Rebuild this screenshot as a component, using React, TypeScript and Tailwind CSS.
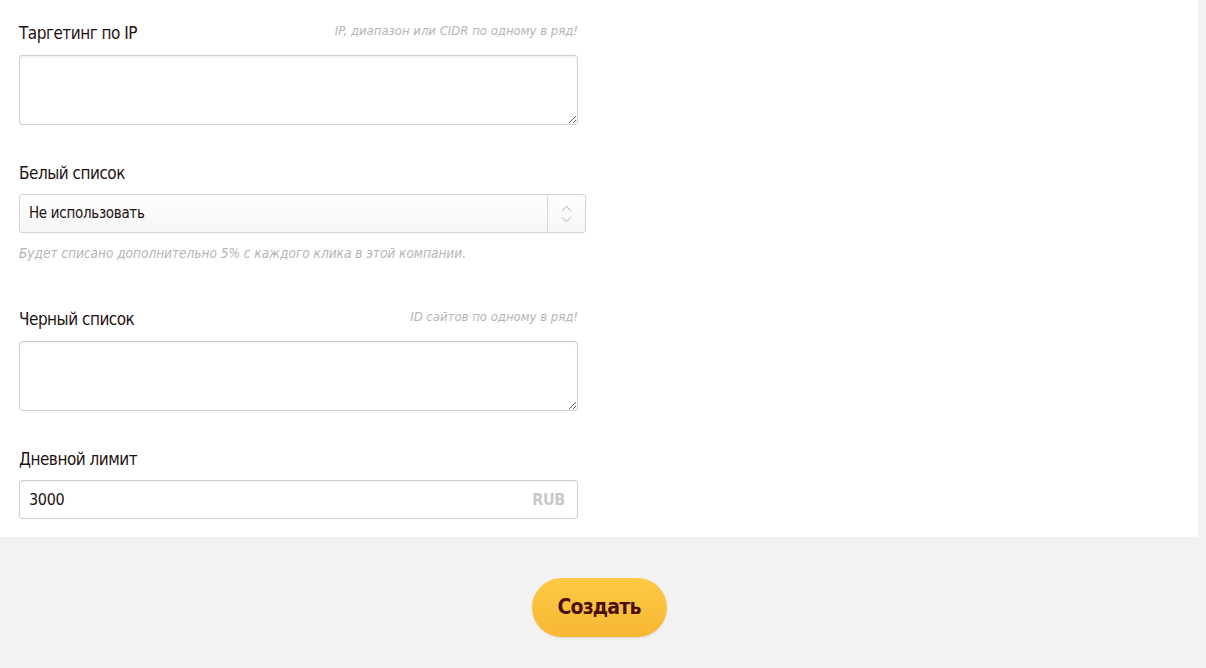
import { ChevronUp, ChevronDown } from "lucide-react";

const font = "font-['DejaVu_Sans_Condensed','Liberation_Sans',sans-serif]";

function Label({ text, hint }: { text: string; hint?: string }) {
  return (
    <div className="flex items-end justify-between w-[559px]">
      <span className="text-[17px] leading-[22px] tracking-[-0.5px] text-[#1f1212]">{text}</span>
      {hint && <span className="text-[13px] italic text-[#b5b5b5] leading-[18px] mb-[4px]">{hint}</span>}
    </div>
  );
}

function Area() {
  return (
    <textarea className="block w-[559px] h-[70px] mt-[11px] border border-[#cfcfcf] rounded-[3px] bg-white shadow-[inset_0_1px_2px_rgba(0,0,0,0.08)] outline-none resize-y" />
  );
}

export default function App() {
  return (
    <div className={`min-h-[668px] bg-[#f2f2f2] ${font}`}>
      <div className="w-[1198px] bg-white pl-[19px] pt-[22px] h-[537px]">
        <Label text="Таргетинг по IP" hint="IP, диапазон или CIDR по одному в ряд!" />
        <Area />

        <div className="mt-[37px]">
          <Label text="Белый список" />
        </div>
        <div className="mt-[10px] w-[567px] h-[39px] flex border border-[#d2d2d2] rounded-[3px] bg-gradient-to-b from-white to-[#f5f5f5]">
          <span className="flex-1 pl-[9px] flex items-center text-[15px] tracking-[-0.3px] text-[#1f1212]">Не использовать</span>
          <div className="w-[38px] border-l border-[#d8d8d8] flex flex-col items-center justify-center text-[#a8a8a8]">
            <ChevronUp size={17} strokeWidth={1.3} className="-mb-[6px]" />
            <ChevronDown size={17} strokeWidth={1.3} />
          </div>
        </div>
        <div className="mt-[10px] text-[13.5px] italic text-[#b5b5b5]">
          Будет списано дополнительно 5% с каждого клика в этой компании.
        </div>

        <div className="mt-[45px]">
          <Label text="Черный список" hint="ID сайтов по одному в ряд!" />
        </div>
        <Area />

        <div className="mt-[37px]">
          <Label text="Дневной лимит" />
        </div>
        <div className="mt-[10px] w-[559px] h-[39px] flex items-center justify-between border border-[#cfcfcf] rounded-[3px] px-[9px] shadow-[inset_0_1px_2px_rgba(0,0,0,0.08)]">
          <span className="text-[16px] tracking-[-0.3px] text-[#1f1212]">3000</span>
          <span className="text-[16px] font-bold tracking-[-0.3px] text-[#c8c8c8] mr-[3px]">RUB</span>
        </div>
      </div>
      <div className="w-[1198px] flex justify-center pt-[41px]">
        <button className="w-[135px] h-[59px] rounded-full bg-gradient-to-b from-[#fdca45] to-[#f8b733] text-[21px] font-bold tracking-[-0.8px] text-[#4b0f12] shadow-[0_1px_2px_rgba(0,0,0,0.1)]">
          Создать
        </button>
      </div>
    </div>
  );
}
